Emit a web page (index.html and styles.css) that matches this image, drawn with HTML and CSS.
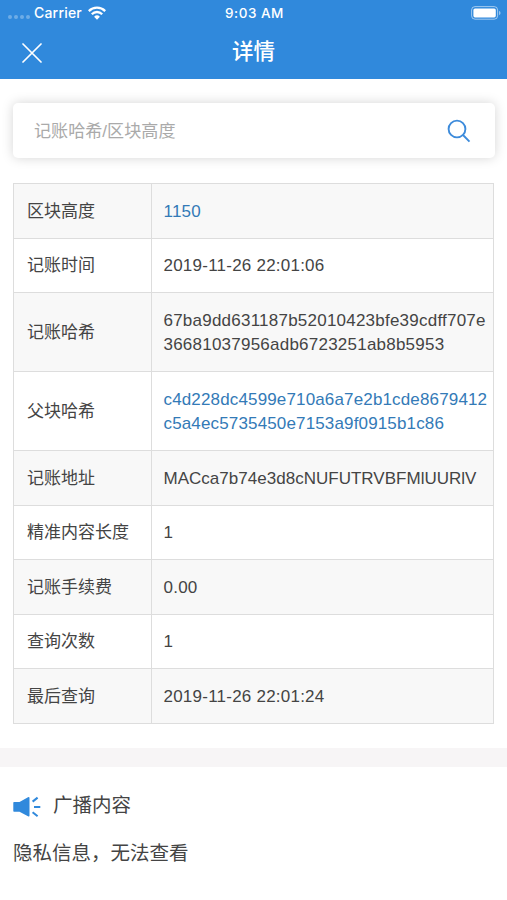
FILE: index.html
```html
<!DOCTYPE html>
<html lang="zh-CN">
<head>
    <meta charset="UTF-8">
    <meta name="viewport" content="width=device-width, initial-scale=1.0">
    <title>详情</title>
    <link rel="stylesheet" href="styles.css">
</head>
<body>
    <header class="header">
        <div class="status-bar">
            <div class="status-left">
                <span class="signal"><i></i><i></i><i></i><i></i></span>
                <span class="carrier">Carrier</span>
                <svg class="wifi" width="18" height="14" viewBox="0 0 18 14" fill="none" stroke="#fff" stroke-width="2.3">
                    <path d="M0.8 5.1 A11.6 11.6 0 0 1 17.2 5.1"/>
                    <path d="M3.8 8.2 A7.3 7.3 0 0 1 14.2 8.2"/>
                    <path d="M9 13.7 L6.1 10.7 A4.1 4.1 0 0 1 11.9 10.7 Z" fill="#fff" stroke="none"/>
                </svg>
            </div>
            <span class="time">9:03 AM</span>
            <svg class="battery" width="30" height="14" viewBox="0 0 30 14">
                <rect x="0.6" y="0.6" width="26" height="12.6" rx="3.4" fill="none" stroke="#fff" stroke-opacity="0.55"/>
                <rect x="2.4" y="2.4" width="22.4" height="9" rx="1.6" fill="#fff"/>
                <path d="M28 4.8 Q29.6 5.6 29.6 7 Q29.6 8.4 28 9.2 Z" fill="#fff" fill-opacity="0.5"/>
            </svg>
        </div>
        <div class="nav-bar">
            <svg class="close" width="20" height="20" viewBox="0 0 20 20" stroke="#fff" stroke-width="1.7" stroke-linecap="round">
                <path d="M1 1 L19 19 M19 1 L1 19"/>
            </svg>
            <h1>详情</h1>
        </div>
    </header>

    <div class="search">
        <input type="text" placeholder="记账哈希/区块高度">
        <svg width="24" height="24" viewBox="0 0 24 24" fill="none" stroke="#3d8bdb" stroke-width="1.9">
            <circle cx="10" cy="10" r="8.4"/>
            <path d="M16 16 L22.5 22.6"/>
        </svg>
    </div>

    <table class="detail">
        <tr><th>区块高度</th><td><a>1150</a></td></tr>
        <tr><th>记账时间</th><td>2019-11-26 22:01:06</td></tr>
        <tr><th>记账哈希</th><td>67ba9dd631187b52010423bfe39cdff707e<br>36681037956adb6723251ab8b5953</td></tr>
        <tr><th>父块哈希</th><td class="parent"><a>c4d228dc4599e710a6a7e2b1cde8679412<br>c5a4ec5735450e7153a9f0915b1c86</a></td></tr>
        <tr><th>记账地址</th><td class="address">MACca7b74e3d8cNUFUTRVBFMlUURlV</td></tr>
        <tr><th>精准内容长度</th><td>1</td></tr>
        <tr><th>记账手续费</th><td>0.00</td></tr>
        <tr><th>查询次数</th><td>1</td></tr>
        <tr><th>最后查询</th><td>2019-11-26 22:01:24</td></tr>
    </table>

    <section class="broadcast">
        <h2>
            <svg width="28" height="22" viewBox="0 0 28 22" fill="#3089dc">
                <path d="M1 6 H6.5 L15 1.2 Q16.5 0.6 16.5 2 V19.6 Q16.5 21 15 20.3 L6.5 15.8 H1 Q0.3 15.8 0.3 15 V6.8 Q0.3 6 1 6 Z"/>
                <path d="M19.6 5.6 L24.6 1.6 M21 11 H27.3 M19.6 16.2 L24.6 20.2" fill="none" stroke="#3089dc" stroke-width="2"/>
            </svg>
            <span>广播内容</span>
        </h2>
        <p>隐私信息，无法查看</p>
    </section>
</body>
</html>
```

FILE: styles.css
```css
* {
    box-sizing: border-box;
}
body {
    margin: 0;
    background-color: #fff;
    color: #444;
    font-family: "Liberation Sans", "Noto Sans CJK SC", sans-serif;
    font-size: 17px;
}
.header {
    height: 79px;
    background-color: #3089dc;
    color: #fff;
}
.status-bar {
    display: grid;
    grid-template-columns: 1fr auto 1fr;
    align-items: center;
    height: 26px;
    padding: 0 6px 0 8px;
    font-family: Inter, sans-serif;
    font-size: 14px;
    font-weight: 500;
}
.status-left {
    display: flex;
    align-items: center;
}
.signal {
    display: flex;
    gap: 2px;
    margin: 8px 4px 0 0;
}
.signal i {
    width: 4px;
    height: 4px;
    border-radius: 50%;
    background-color: rgba(255, 255, 255, 0.3);
}
.carrier {
    margin-top: -1px;
    letter-spacing: 0.2px;
}
.wifi {
    margin-left: 6px;
}
.time {
    font-size: 13.5px;
    letter-spacing: 0.5px;
}
.battery {
    justify-self: end;
}
.nav-bar {
    display: grid;
    grid-template-columns: 1fr auto 1fr;
    align-items: center;
    height: 53px;
    padding: 0 22px;
}
.nav-bar h1 {
    margin: 0;
    font-size: 21.5px;
    font-weight: 500;
    line-height: 53px;
}
.search {
    display: flex;
    align-items: center;
    height: 55px;
    margin: 24px 12px 0 13px;
    padding: 0 24px 0 21px;
    border-radius: 5px;
    box-shadow: 0 0 12px rgba(0, 0, 0, 0.17);
}
.search input {
    flex: 1;
    padding: 2px 0 0;
    border: none;
    outline: none;
    background: none;
    font-family: inherit;
    font-size: 17.1px;
}
.search input::placeholder {
    color: #aaa;
}
.detail {
    width: 481px;
    margin: 25px 0 0 13px;
    border-collapse: collapse;
    table-layout: fixed;
    line-height: 24.5px;
}
.detail tr:nth-child(odd) {
    background-color: #f8f8f8;
}
.detail th,
.detail td {
    padding: 15.5px 0 13.5px 12px;
    border: 1px solid #ddd;
    text-align: left;
    font-weight: normal;
}
.detail th {
    width: 138px;
    padding-left: 13px;
}
.detail td {
    padding-left: 11.5px;
    letter-spacing: 0.23px;
    white-space: nowrap;
}
.detail .parent {
    letter-spacing: 0.15px;
}
.detail .address {
    letter-spacing: 0.02px;
}
.detail a {
    color: #337ab7;
}
.broadcast {
    margin-top: 24px;
    padding: 28px 13px 0;
    border-top: 19px solid #f7f5f6;
}
.broadcast h2 {
    display: flex;
    align-items: center;
    gap: 12px;
    margin: 0;
    font-size: 19.5px;
    font-weight: normal;
    line-height: 28px;
}
.broadcast h2 span {
    margin-top: -4px;
}
.broadcast p {
    margin: 19px 0 0;
    font-size: 19.5px;
    line-height: 30px;
}
```
